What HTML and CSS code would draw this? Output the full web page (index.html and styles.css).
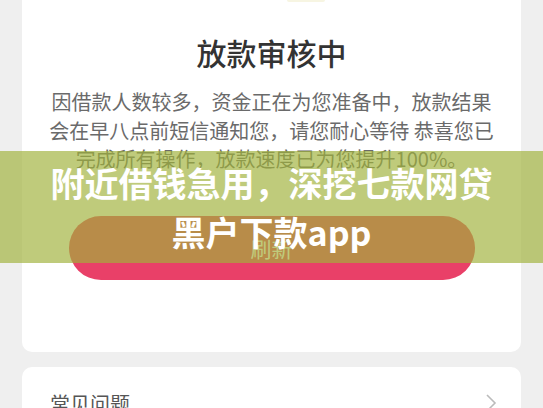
FILE: index.html
```html
<!DOCTYPE html>
<html lang="zh-CN">
<head>
  <meta charset="UTF-8" />
  <meta name="viewport" content="width=device-width, initial-scale=1.0"/>
  <title>放款审核中</title>
  <link rel="stylesheet" href="styles.css">
</head>
<body>
  <main>
    <section class="card status">
      <div class="status-icon"></div>
      <h1>放款审核中</h1>
      <p class="status-text">因借款人数较多，资金正在为您准备中，放款结果会在早八点前短信通知您，请您耐心等待 恭喜您已完成所有操作，放款速度已为您提升100%。</p>
      <button class="refresh">刷新</button>
    </section>

    <section class="card faq">
      <span>常见问题</span>
      <svg class="arrow" width="12" height="20" viewBox="0 0 12 20">
        <path d="M2 2 L10 10 L2 18" fill="none" stroke="#bbb" stroke-width="1.6"/>
      </svg>
    </section>
  </main>

  <div class="banner">
    <p>附近借钱急用，深挖七款网贷<br>黑户下款app</p>
  </div>
</body>
</html>
```

FILE: styles.css
```css
body {
  font-family: "Noto Sans CJK SC", "Noto Sans", sans-serif;
  background: #efefef;
  margin: 0;
  padding: 0 22px;
  overflow: hidden;
}
.card {
  background: #fff;
  border-radius: 10px;
}
.status {
  padding: 0 0 72px;
  border-top-left-radius: 0;
  border-top-right-radius: 0;
  text-align: center;
}
.status-icon {
  width: 38px;
  height: 2px;
  margin: 0 0 0 265px;
  background: #f7f5e2;
  border-radius: 0 0 20px 20px;
}
h1 {
  margin: 29px 0 0;
  font-size: 30px;
  line-height: 42px;
  font-weight: 500;
  color: #333;
}
.status-text {
  width: 452px;
  margin: 15px auto 0;
  font-size: 20px;
  line-height: 28.5px;
  color: #6a6a6a;
}
.refresh {
  display: block;
  width: 406px;
  height: 64px;
  margin: 42px auto 0;
  border: none;
  border-radius: 32px;
  background: #e94068;
  color: #fff;
  font-family: inherit;
  font-size: 21px;
}
.faq {
  margin-top: 15px;
  padding: 22px 24px 20px 28px;
  display: flex;
  align-items: center;
  justify-content: space-between;
  font-size: 20px;
  color: #555;
}
.banner {
  position: absolute;
  top: 151px;
  left: 0;
  right: 0;
  height: 112px;
  background: rgba(160, 178, 58, 0.67);
  display: flex;
  align-items: center;
  justify-content: center;
}
.banner p {
  margin: 0;
  color: #fff;
  font-size: 34px;
  font-weight: 700;
  line-height: 49px;
  text-align: center;
}
```
